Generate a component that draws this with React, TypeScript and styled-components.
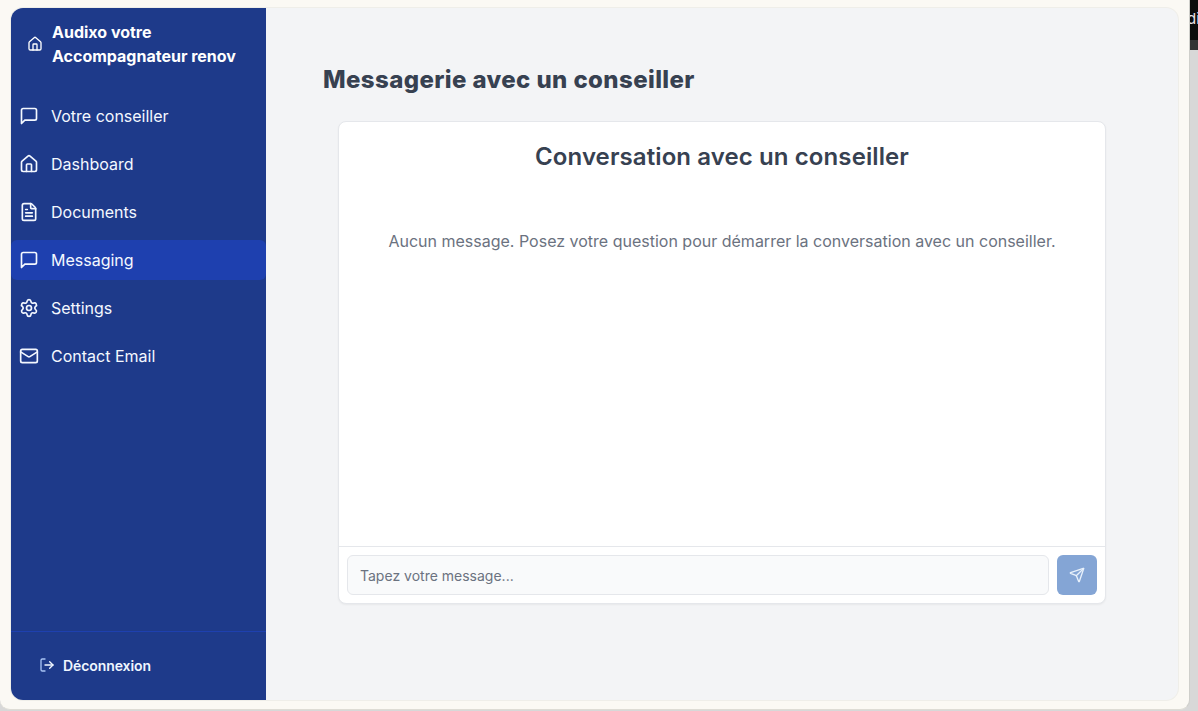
import React from 'react';
import styled, { createGlobalStyle } from 'styled-components';
import { FileText, Home, LogOut, Mail, Send, Settings } from 'lucide-react';

const GlobalStyle = createGlobalStyle`
  html, body {
    margin: 0;
    padding: 0;
    height: 100%;
    overflow: hidden;
    background: #d8d8d8;
    font-family: Inter, "Liberation Sans", sans-serif;
  }
  * { box-sizing: border-box; }
`;

const Screen = styled.div`
  position: relative;
  width: 1198px;
  height: 711px;
`;

const BackWindow = styled.div`
  position: absolute;
  top: 0;
  right: 0;
  width: 8px;
  height: 50px;
  overflow: hidden;
  background: #0c0c0c;
  border-bottom: 10px solid #333;
  color: #e8e2e8;
  font-size: 15px;
  line-height: 38px;
  text-indent: -3px;
  white-space: nowrap;
`;

const Frame = styled.div`
  width: 1190px;
  height: 710px;
  padding: 8px 11px 9px 11px;
  background: #fbf9f4;
  border-right: 1px solid #cfcfcb;
  border-bottom: 1px solid #dedcd5;
  border-radius: 0 0 10px 10px;
`;

const Shell = styled.div`
  display: flex;
  height: 692px;
  width: 1167px;
  background: #f3f4f6;
  border-radius: 12px;
  box-shadow: 0 0 0 1px #efeee9;
`;

const Sidebar = styled.aside`
  display: flex;
  flex-direction: column;
  width: 255px;
  flex-shrink: 0;
  background: #1e3a8a;
  border-radius: 12px 0 0 12px;
  color: #fff;
`;

const Brand = styled.div`
  display: flex;
  align-items: center;
  gap: 9px;
  height: 72px;
  padding: 0 16px;
  font-size: 16px;
  line-height: 24px;
  font-weight: 700;
`;

const Nav = styled.nav`
  display: flex;
  flex-direction: column;
  gap: 8px;
  margin-top: 16px;
`;

const NavItem = styled.a<{ $active?: boolean }>`
  display: flex;
  align-items: center;
  gap: 12px;
  height: 40px;
  padding: 0 8px;
  border-radius: 6px;
  font-size: 16px;
  font-weight: 400;
  color: #f4f8ff;
  background: ${({ $active }) => ($active ? '#1e40af' : 'transparent')};
`;

const SidebarFooter = styled.div`
  display: flex;
  align-items: center;
  margin-top: auto;
  height: 69px;
  padding: 0 28px 2px;
  border-top: 1px solid #1e40af;
`;

const LogoutButton = styled.button`
  display: flex;
  align-items: center;
  gap: 8px;
  padding: 0;
  border: 0;
  background: none;
  color: #eff6ff;
  font-family: inherit;
  font-size: 14px;
  font-weight: 600;
  letter-spacing: -0.08px;

  svg path:last-child { stroke: #a9c4f5; }
`;

const Main = styled.main`
  flex: 1;
  padding: 56px 72px 0 57px;
`;

const PageTitle = styled.h1`
  margin: 0 0 25px;
  font-size: 24px;
  line-height: 32px;
  font-weight: 800;
  letter-spacing: 0.4px;
  color: #374151;
`;

const Card = styled.section`
  display: flex;
  flex-direction: column;
  height: 483px;
  margin-left: 15px;
  background: #fff;
  border: 1px solid #e5e7eb;
  border-radius: 8px;
  box-shadow: 0 1px 2px rgba(0, 0, 0, 0.05);
`;

const CardTitle = styled.h2`
  margin: 0;
  padding-top: 19px;
  font-size: 24px;
  line-height: 32px;
  font-weight: 600;
  letter-spacing: 0.1px;
  text-align: center;
  color: #374151;
`;

const EmptyText = styled.p`
  flex: 1;
  margin: 0;
  padding-top: 56px;
  font-size: 16px;
  line-height: 24px;
  text-align: center;
  color: #6b7280;
`;

const Composer = styled.form`
  display: flex;
  gap: 8px;
  padding: 8px;
  border-top: 1px solid #e5e7eb;
`;

const MessageInput = styled.input`
  flex: 1;
  height: 40px;
  padding: 0 12px;
  background: #f9fafb;
  border: 1px solid #e5e7eb;
  border-radius: 6px;
  font-family: inherit;
  font-size: 14px;

  &::placeholder { color: #6b7280; opacity: 1; }
`;

const SendButton = styled.button`
  display: flex;
  align-items: center;
  justify-content: center;
  width: 40px;
  height: 40px;
  padding: 0;
  border: 0;
  border-radius: 6px;
  background: #84a5d5;
  color: #e8f1fb;
`;

// older lucide speech bubble, the tail ends in a sharp corner
const ChatIcon: React.FC<{ size?: number }> = ({ size = 20 }) => (
  <svg
    width={size}
    height={size}
    viewBox="0 0 24 24"
    fill="none"
    stroke="currentColor"
    strokeWidth={2}
    strokeLinecap="round"
    strokeLinejoin="round"
  >
    <path d="M21 15a2 2 0 0 1-2 2H7l-4 4V5a2 2 0 0 1 2-2h14a2 2 0 0 1 2 2z" />
  </svg>
);

const navItems = [
  { label: 'Votre conseiller', icon: ChatIcon },
  { label: 'Dashboard', icon: Home },
  { label: 'Documents', icon: FileText },
  { label: 'Messaging', icon: ChatIcon, active: true },
  { label: 'Settings', icon: Settings },
  { label: 'Contact Email', icon: Mail },
];

const App: React.FC = () => (
  <Screen>
    <GlobalStyle />
    <BackWindow>di</BackWindow>
    <Frame>
      <Shell>
        <Sidebar>
          <Brand>
            <Home size={16} />
            <span>
              Audixo votre
              <br />
              Accompagnateur renov
            </span>
          </Brand>
          <Nav>
            {navItems.map(({ label, icon: Icon, active }) => (
              <NavItem key={label} $active={active}>
                <Icon size={20} />
                {label}
              </NavItem>
            ))}
          </Nav>
          <SidebarFooter>
            <LogoutButton type="button">
              <LogOut size={16} />
              Déconnexion
            </LogoutButton>
          </SidebarFooter>
        </Sidebar>
        <Main>
          <PageTitle>Messagerie avec un conseiller</PageTitle>
          <Card>
            <CardTitle>Conversation avec un conseiller</CardTitle>
            <EmptyText>
              Aucun message. Posez votre question pour démarrer la conversation avec un conseiller.
            </EmptyText>
            <Composer>
              <MessageInput placeholder="Tapez votre message..." />
              <SendButton type="button">
                <Send size={16} />
              </SendButton>
            </Composer>
          </Card>
        </Main>
      </Shell>
    </Frame>
  </Screen>
);

export default App;
